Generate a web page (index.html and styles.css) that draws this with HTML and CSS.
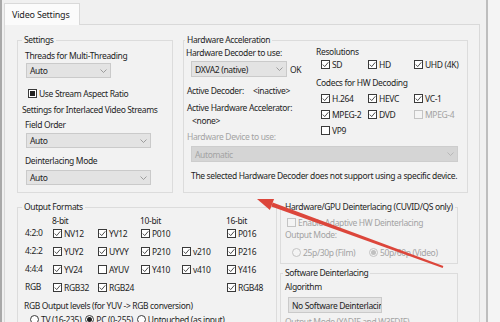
FILE: index.html
```html
<!DOCTYPE html>
<html lang="en">
<head>
    <meta charset="UTF-8">
    <title>Video Settings</title>
    <link rel="stylesheet" href="styles.css">
</head>
<body>
    <div class="window">
        <div class="tab">Video Settings</div>
        <div class="panel">
            <div class="row-top">
                <fieldset class="group settings">
                    <legend>Settings</legend>
                    <div class="txt threads">Threads for Multi-Threading</div>
                    <div class="combo c-threads"><span>Auto</span><svg class="chev" viewBox="0 0 7 4"><path d="M0.5 0.5l3 3 3-3"/></svg></div>
                    <div class="check aspect"><span class="cb mixed"></span>Use Stream Aspect Ratio</div>
                    <div class="txt sub">Settings for Interlaced Video Streams</div>
                    <div class="txt field">Field Order</div>
                    <div class="combo c-wide c-field"><span>Auto</span><svg class="chev" viewBox="0 0 7 4"><path d="M0.5 0.5l3 3 3-3"/></svg></div>
                    <div class="txt mode">Deinterlacing Mode</div>
                    <div class="combo c-wide c-mode"><span>Auto</span><svg class="chev" viewBox="0 0 7 4"><path d="M0.5 0.5l3 3 3-3"/></svg></div>
                </fieldset>

                <fieldset class="group hwaccel">
                    <legend>Hardware Acceleration</legend>
                    <div class="hw-top">
                        <div class="hw-left">
                            <div class="txt dec-label">Hardware Decoder to use:</div>
                            <div class="dec-row">
                                <div class="combo c-dec"><span>DXVA2 (native)</span><svg class="chev" viewBox="0 0 7 4"><path d="M0.5 0.5l3 3 3-3"/></svg></div>
                                <span>OK</span>
                            </div>
                            <div class="txt active"><span class="key">Active Decoder:</span>&lt;inactive&gt;</div>
                            <div class="txt accel">Active Hardware Accelerator:</div>
                            <div class="txt none">&lt;none&gt;</div>
                        </div>
                        <div class="hw-right">
                            <div class="txt">Resolutions</div>
                            <div class="cbgrid">
                                <div class="check"><span class="cb"><svg viewBox="0 0 7 7"><path d="M0.8 3.6l1.9 2 3.6-4.3"/></svg></span>SD</div>
                                <div class="check"><span class="cb"><svg viewBox="0 0 7 7"><path d="M0.8 3.6l1.9 2 3.6-4.3"/></svg></span>HD</div>
                                <div class="check"><span class="cb"><svg viewBox="0 0 7 7"><path d="M0.8 3.6l1.9 2 3.6-4.3"/></svg></span>UHD (4K)</div>
                            </div>
                            <div class="txt codecs">Codecs for HW Decoding</div>
                            <div class="cbgrid codec-grid">
                                <div class="check"><span class="cb"><svg viewBox="0 0 7 7"><path d="M0.8 3.6l1.9 2 3.6-4.3"/></svg></span>H.264</div>
                                <div class="check"><span class="cb"><svg viewBox="0 0 7 7"><path d="M0.8 3.6l1.9 2 3.6-4.3"/></svg></span>HEVC</div>
                                <div class="check"><span class="cb"><svg viewBox="0 0 7 7"><path d="M0.8 3.6l1.9 2 3.6-4.3"/></svg></span>VC-1</div>
                                <div class="check"><span class="cb"><svg viewBox="0 0 7 7"><path d="M0.8 3.6l1.9 2 3.6-4.3"/></svg></span>MPEG-2</div>
                                <div class="check"><span class="cb"><svg viewBox="0 0 7 7"><path d="M0.8 3.6l1.9 2 3.6-4.3"/></svg></span>DVD</div>
                                <div class="check off"><span class="cb"></span>MPEG-4</div>
                                <div class="check"><span class="cb"></span>VP9</div>
                            </div>
                        </div>
                    </div>
                    <div class="txt off dev-label">Hardware Device to use:</div>
                    <div class="combo off c-dev"><span>Automatic</span><svg class="chev" viewBox="0 0 7 4"><path d="M0.5 0.5l3 3 3-3"/></svg></div>
                    <div class="txt msg">The selected Hardware Decoder does not support using a specific device.</div>
                </fieldset>
            </div>

            <div class="row-bottom">
                <fieldset class="group formats">
                    <legend>Output Formats</legend>
                    <div class="fmt-grid bits">
                        <span></span><span class="bit">8-bit</span><span></span><span class="bit">10-bit</span><span></span><span class="bit">16-bit</span>
                    </div>
                    <div class="fmt-grid rows">
                        <span class="pix">4:2:0</span>
                        <div class="check"><span class="cb"><svg viewBox="0 0 7 7"><path d="M0.8 3.6l1.9 2 3.6-4.3"/></svg></span>NV12</div>
                        <div class="check"><span class="cb"><svg viewBox="0 0 7 7"><path d="M0.8 3.6l1.9 2 3.6-4.3"/></svg></span>YV12</div>
                        <div class="check"><span class="cb"><svg viewBox="0 0 7 7"><path d="M0.8 3.6l1.9 2 3.6-4.3"/></svg></span>P010</div>
                        <span></span>
                        <div class="check"><span class="cb"><svg viewBox="0 0 7 7"><path d="M0.8 3.6l1.9 2 3.6-4.3"/></svg></span>P016</div>

                        <span class="pix">4:2:2</span>
                        <div class="check"><span class="cb"><svg viewBox="0 0 7 7"><path d="M0.8 3.6l1.9 2 3.6-4.3"/></svg></span>YUY2</div>
                        <div class="check"><span class="cb"><svg viewBox="0 0 7 7"><path d="M0.8 3.6l1.9 2 3.6-4.3"/></svg></span>UYVY</div>
                        <div class="check"><span class="cb"><svg viewBox="0 0 7 7"><path d="M0.8 3.6l1.9 2 3.6-4.3"/></svg></span>P210</div>
                        <div class="check"><span class="cb"><svg viewBox="0 0 7 7"><path d="M0.8 3.6l1.9 2 3.6-4.3"/></svg></span>v210</div>
                        <div class="check"><span class="cb"><svg viewBox="0 0 7 7"><path d="M0.8 3.6l1.9 2 3.6-4.3"/></svg></span>P216</div>

                        <span class="pix">4:4:4</span>
                        <div class="check"><span class="cb"><svg viewBox="0 0 7 7"><path d="M0.8 3.6l1.9 2 3.6-4.3"/></svg></span>YV24</div>
                        <div class="check"><span class="cb"></span>AYUV</div>
                        <div class="check"><span class="cb"><svg viewBox="0 0 7 7"><path d="M0.8 3.6l1.9 2 3.6-4.3"/></svg></span>Y410</div>
                        <div class="check"><span class="cb"><svg viewBox="0 0 7 7"><path d="M0.8 3.6l1.9 2 3.6-4.3"/></svg></span>v410</div>
                        <div class="check"><span class="cb"><svg viewBox="0 0 7 7"><path d="M0.8 3.6l1.9 2 3.6-4.3"/></svg></span>Y416</div>

                        <span class="pix">RGB</span>
                        <div class="check"><span class="cb"><svg viewBox="0 0 7 7"><path d="M0.8 3.6l1.9 2 3.6-4.3"/></svg></span>RGB32</div>
                        <div class="check"><span class="cb"><svg viewBox="0 0 7 7"><path d="M0.8 3.6l1.9 2 3.6-4.3"/></svg></span>RGB24</div>
                        <span></span>
                        <span></span>
                        <div class="check"><span class="cb"><svg viewBox="0 0 7 7"><path d="M0.8 3.6l1.9 2 3.6-4.3"/></svg></span>RGB48</div>
                    </div>
                    <div class="txt levels">RGB Output levels (for YUV -&gt; RGB conversion)</div>
                    <div class="radios">
                        <div class="radio"><span class="rb"></span>TV (16-235)</div>
                        <div class="radio"><span class="rb on"></span>PC (0-255)</div>
                        <div class="radio"><span class="rb"></span>Untouched (as input)</div>
                    </div>
                </fieldset>

                <div class="deint">
                    <fieldset class="group hwdeint">
                        <legend>Hardware/GPU Deinterlacing (CUVID/QS only)</legend>
                        <div class="check off enable"><span class="cb"></span>Enable Adaptive HW Deinterlacing</div>
                        <div class="txt off outmode">Output Mode:</div>
                        <div class="radios film">
                            <div class="radio off r-film"><span class="rb"></span>25p/30p (Film)</div>
                            <div class="radio off"><span class="rb on"></span>50p/60p (Video)</div>
                        </div>
                    </fieldset>
                    <fieldset class="group swdeint">
                        <legend>Software Deinterlacing</legend>
                        <div class="txt algo">Algorithm</div>
                        <div class="combo c-algo"><span>No Software Deinterlacing</span></div>
                        <div class="txt off yadif">Output Mode (YADIF and W3FDIF)</div>
                    </fieldset>
                </div>
            </div>
        </div>
    </div>

    <!-- red annotation arrow drawn over the dialog -->
    <svg class="arrow" viewBox="0 0 500 322">
        <polygon points="443.3,266.1 442.7,267.9 271.3,206.4 272.7,202.6"/>
        <polygon points="257,199 274.1,198.9 269.9,210.1"/>
    </svg>
</body>
</html>
```

FILE: styles.css
```css
* {
    box-sizing: border-box;
}
body {
    margin: 0;
    width: 500px;
    height: 322px;
    overflow: hidden;
    position: relative;
    background: #f4f4f4;
    font-family: "Noto Sans", "Open Sans", sans-serif;
    font-size: 8.5px;
    letter-spacing: -0.35px;
    color: #1e1e1e;
}
.window {
    width: 488px;
    height: 322px;
    border-left: 2px solid #a9a9a9;
    border-right: 2px solid #bdbdbd;
    background: #f0f0f0;
    padding: 3px 6px 0 2px;
}
.tab {
    position: relative;
    z-index: 1;
    width: 76px;
    height: 22px;
    margin-bottom: -1px;
    padding-left: 7px;
    line-height: 21px;
    background: #fbfbfb;
    border: 1px solid #d9d9d9;
    border-bottom: none;
    font-size: 9px;
    letter-spacing: -0.2px;
}
.panel {
    height: 310px;
    padding: 9px 0 0 12px;
    background: #f2f2f2;
    border: 1px solid #d9d9d9;
}

/* group boxes */
.group {
    margin: 0;
    min-width: 0;
    padding: 0 0 0 4px;
    border: 1px solid #dcdcdc;
}
.group legend {
    padding: 0 2px;
    line-height: 12px;
    white-space: nowrap;
}
.txt {
    line-height: 12px;
    white-space: nowrap;
}
.off,
.off .txt {
    color: #a3a3a3;
}

/* combo boxes */
.combo {
    display: flex;
    align-items: center;
    justify-content: space-between;
    height: 15px;
    padding: 0 3px 0 3px;
    background: #e3e3e3;
    border: 1px solid #cacaca;
    white-space: nowrap;
    overflow: hidden;
}
.chev {
    width: 7px;
    height: 4px;
    flex: none;
}
.chev path {
    fill: none;
    stroke: #8a8a8a;
    stroke-width: 0.8;
}
.combo.off {
    background: #d5d5d5;
    border-color: #cdcdcd;
}
.combo.off .chev path {
    stroke: #b0b0b0;
}

/* check boxes and radios */
.check,
.radio {
    display: flex;
    align-items: center;
    height: 12px;
    white-space: nowrap;
}
.cb {
    display: flex;
    align-items: center;
    justify-content: center;
    width: 9px;
    height: 9px;
    margin-right: 2px;
    flex: none;
    background: #fff;
    border: 1px solid #3a3a3a;
}
.cb svg {
    width: 7px;
    height: 7px;
}
.cb path {
    fill: none;
    stroke: #3a3a3a;
    stroke-width: 0.9;
}
.cb.mixed::after {
    content: "";
    width: 5px;
    height: 5px;
    background: #222;
}
.off .cb {
    background: #f4f4f4;
    border-color: #c4c4c4;
}
.rb {
    display: flex;
    align-items: center;
    justify-content: center;
    width: 9px;
    height: 9px;
    margin-right: 2px;
    flex: none;
    background: #fff;
    border: 1px solid #3a3a3a;
    border-radius: 50%;
}
.rb.on::after {
    content: "";
    width: 5px;
    height: 5px;
    border-radius: 50%;
    background: #222;
}
.off .rb {
    background: #f4f4f4;
    border-color: #c4c4c4;
}
.off .rb.on::after {
    background: #c0c0c0;
}

/* top row */
.row-top {
    display: grid;
    grid-template-columns: 156px 285px;
    column-gap: 10px;
}
.threads {
    margin: 4px 0 0 3px;
}
.c-threads {
    width: 85px;
    margin: 1px 0 0 4px;
}
.aspect {
    margin: 9px 0 0 6px;
}
.sub {
    margin-top: 5px;
}
.field {
    margin: 3px 0 0 3px;
}
.c-wide {
    width: 125px;
    margin-left: 4px;
}
.c-field {
    margin-top: 2px;
}
.mode {
    margin: 7px 0 0 3px;
}
.c-mode {
    margin-top: 3px;
    margin-bottom: 7px;
}

.hwaccel {
    padding-left: 1px;
}
.hw-top {
    display: flex;
    height: 85px;
}
.hw-left {
    width: 131px;
}
.dec-label {
    margin: 1px 0 0 1px;
}
.dec-row {
    display: flex;
    align-items: center;
    gap: 3px;
    margin: 2px 0 0 6px;
}
.c-dec {
    width: 96px;
    height: 16px;
}
.active {
    margin: 8px 0 0 2px;
}
.active .key {
    display: inline-block;
    width: 66px;
}
.accel {
    margin: 5px 0 0 2px;
}
.none {
    margin: 1px 0 0 7px;
}
.cbgrid {
    display: grid;
    grid-template-columns: 47px 46px auto;
    margin-left: 5px;
}
.codecs {
    margin-top: 7px;
}
.codec-grid {
    row-gap: 4px;
    margin-top: 3px;
}
.dev-label {
    margin-left: 2px;
}
.c-dev {
    width: 267px;
    height: 16px;
    margin: 3px 0 0 6px;
    color: #a3a3a3;
}
.msg {
    margin: 8px 0 0 6px;
}

/* bottom row */
.row-bottom {
    display: flex;
    gap: 3px;
    margin-top: 8px;
}
.formats {
    width: 260px;
    height: 140px;
}
.fmt-grid {
    display: grid;
    grid-template-columns: 31px 45px 43px 41px 45px auto;
}
.bits {
    margin-top: 2px;
    line-height: 12px;
}
.bit {
    margin-left: -1px;
}
.rows {
    grid-auto-rows: 12px;
    row-gap: 6px;
}
.pix {
    padding-left: 3px;
    line-height: 12px;
}
.levels {
    margin: 7px 0 0 2px;
}
.radios {
    display: flex;
    gap: 4px;
    margin: 1px 0 0 8px;
}

.deint {
    width: 178px;
}
.hwdeint {
    padding: 0 0 5px 2px;
}
.enable {
    margin: 3px 0 0 4px;
}
.outmode {
    margin: 1px 0 0 2px;
}
.film {
    gap: 0;
    margin: 5px 0 0 9px;
}
.r-film {
    width: 77px;
}
.swdeint {
    height: 80px;
    margin-top: 3px;
    padding-left: 2px;
}
.algo {
    margin: 2px 0 0 2px;
}
.c-algo {
    width: 94px;
    height: 16px;
    margin: 4px 0 0 5px;
    justify-content: flex-start;
}
.yadif {
    margin: 3px 0 0 2px;
}

.arrow {
    position: absolute;
    left: 0;
    top: 0;
    width: 500px;
    height: 322px;
    pointer-events: none;
}
.arrow polygon {
    fill: #dc463b;
}
```
